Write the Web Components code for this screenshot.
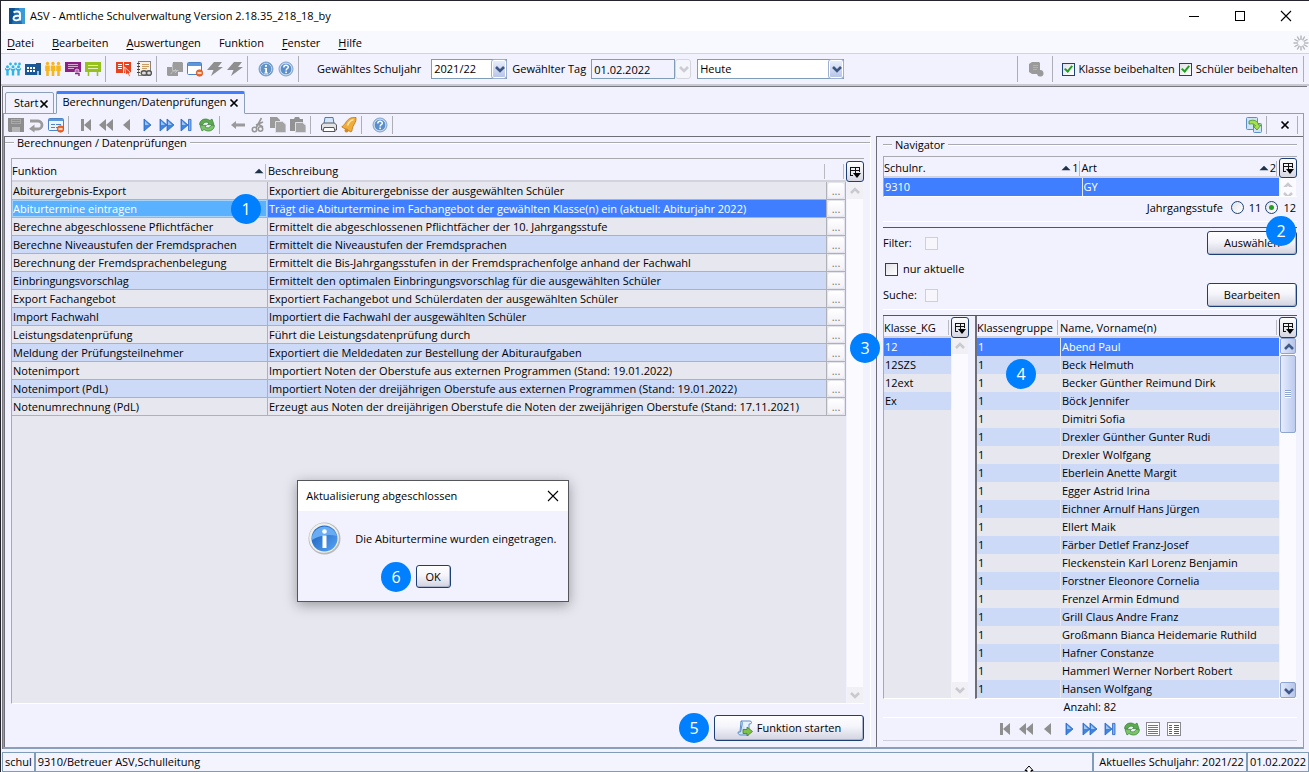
<!DOCTYPE html>
<html lang="de">
<head>
<meta charset="utf-8">
<title>ASV - Amtliche Schulverwaltung</title>
<style>
html, body { margin: 0; }
body { font: 11px/14px "Open Sans", "Noto Sans", sans-serif; color: #000; background: #f2f2ff; }
</style>
</head>
<body>
<asv-app></asv-app>
<script>
const define = (name, html, setup) => {
  const tpl = document.createElement('template');
  tpl.innerHTML = html;
  customElements.define(name, class extends HTMLElement {
    constructor() {
      super();
      this.attachShadow({ mode: 'open' }).append(tpl.content.cloneNode(true));
    }
    connectedCallback() { if (setup) setup(this, this.shadowRoot); }
  });
};

/* ---------- icons ---------- */
const G = '#8f8f8f', B = '#3f86e0';
const tri = (x, dir, c) => {
  const edge = c === B ? ' stroke="#2a66c4" stroke-width=".8"' : '';
  const shine = c === B ? `<path d="M${x + 1} 4v4h4z" fill="#9cc6f5"/>` : '';
  return dir > 0
    ? `<path d="M${x} 2v12l7-6z" fill="${c}"${edge}/>${shine}`
    : `<path d="M${x + 7} 2v12l-7-6z" fill="${c}"/>`;
};
const person = (x, c) => `<circle cx="${x}" cy="2.500" r="1.700" fill="${c}"/><path d="M${x - 2.3} 4.500h4.600v5.500h-1v5h-2.600v-5h-1z" fill="${c}"/>`;
const kid = x => `<circle cx="${x}" cy="5.800" r="1.500" fill="#2fb4e6"/><path d="M${x - 2.5} 6.500l1.500 1.500h2l1.500-1.500v2l-1.300 1.500v4.500h-2.400V10l-1.300-1.500z" fill="#2fb4e6"/>`;
const sheet = lines => `<rect x="1.500" y="1.500" width="13" height="13" fill="#fff" stroke="#8a8a92"/>${lines}`;
const disc = `<circle cx="8" cy="8" r="7" fill="#4f83bd" stroke="#7da2cc"/><circle cx="8" cy="8" r="5.800" fill="#5f93cb" stroke="#c9dcf0" stroke-width=".9"/>`;
const minus = `<circle cx="12.500" cy="12" r="3.300" fill="#f0692a" stroke="#c94a12" stroke-width=".6"/><rect x="10.500" y="11.300" width="4" height="1.400" fill="#fff"/>`;
const ICONS = {
  logo: `<rect width="16" height="16" fill="#1b6fb5"/><path d="M0 0h6L3 16H0z" fill="#0d4f8c"/><path d="M10 0h6v16h-3z" fill="#3a9bd8"/><path d="M4.500 4.500c2-1.400 6.500-1.600 6.500 1.500v6.500M11 8c-3-.6-6.500-.2-6.500 2.200 0 3 5 2.600 6.500.2" fill="none" stroke="#fff" stroke-width="1.900"/>`,
  kids: kid(2.5) + kid(8) + kid(13.5) + `<circle cx="5.500" cy="3" r="1.400" fill="#2fb4e6"/><circle cx="10.500" cy="3" r="1.400" fill="#2fb4e6"/><circle cx="14.500" cy="3" r="1.400" fill="#2fb4e6"/>`,
  building: `<path d="M0 3h11V2h5v12H0z" fill="#1a5794"/><path d="M2 6h2v2H2zM5 6h2v2H5zM8 6h2v2H8zM2 9h2v2H2zM5 9h2v2H5zM8 9h2v2H8z" fill="#fff"/><path d="M12 10h2v4h-2z" fill="#9fc0e0"/>`,
  adults: person(2.5, '#f6b61c') + person(8, '#f6b61c') + person(13.5, '#f6b61c'),
  board: `<path d="M0 1h16v10H0z" fill="#8b2082"/><path d="M3 3.500h10M3 5.500h10M3 7.500h6" stroke="#d9a9d5"/><circle cx="12" cy="10" r="2" fill="#b86bb0" stroke="#f2f2ff" stroke-width=".6"/><path d="M10 12.500h4V15" stroke="#8b2082" stroke-width="1.400" fill="none"/>`,
  greenboard: `<path d="M0 1h16v10H0z" fill="#97c11f"/><path d="M3 4.500h10M3 7.500h10" stroke="#e3f0bd"/><path d="M3.500 11v4M12.500 11v4" stroke="#97c11f" stroke-width="1.600"/>`,
  book: `<path d="M0 1h7v11H0zM8 1h7v11H8z" fill="#e8431f"/><path d="M2 3.500h4M2 5.500h4M2 7.500h4M9 3.500h4" stroke="#fff"/><path d="M8.500 6l6.500 6-2 .3 1.500 2.700-1.500.5-1.300-2.700-1.700 1.200z" fill="#e8431f" stroke="#fff" stroke-width=".7"/>`,
  notebook: `<rect x="2.500" y=".5" width="12" height="14" fill="#f4f1ea" stroke="#8b8378"/><path d="M1 2.500h3M1 5.500h3M1 8.500h3M1 11.500h3" stroke="#444"/><path d="M6 3.500h7M6 5.500h7M6 7.500h5" stroke="#c79b62"/><ellipse cx="8" cy="12" rx="2.800" ry="2.200" fill="#dcdce0" stroke="#555" stroke-width="1.400"/><ellipse cx="13" cy="12" rx="2.500" ry="2.200" fill="#dcdce0" stroke="#555" stroke-width="1.400"/>`,
  cubes: `<path d="M6 1h9l1 1v9h-5v4H1l-1-1V6h5z" fill="#9c9c9c"/><path d="M5.500 5v4.500h6M4 13c1-3 3-3 5-3M8 8l2 2-2 2" stroke="#c2c2c2" fill="none"/>`,
  windowminus: `<rect x=".5" y="1.500" width="14" height="12" rx="1" fill="#fff" stroke="#4b83c4"/><path d="M1 2h13v3H1z" fill="#5c97db"/>` + minus,
  formminus: `<rect x=".5" y="1.500" width="15" height="12" rx="1" fill="#eef4fc" stroke="#4b83c4"/><path d="M1 2h14v2H1z" fill="#5c97db"/><path d="M3 7.500h4M3 10.500h4M8 7.500h5M8 10.500h2" stroke="#4b83c4"/>` + minus,
  bolt: `<path d="M7 1h8l-4 5h5L4 15l2.500-6H0z" fill="${G}"/>`,
  info: disc + `<path d="M7 4h2v1.700H7zM6.500 7H9v4.500h1v1H6.300v-1h.9V8h-.7z" fill="#fff"/>`,
  help: disc.replace('#4f83bd', '#b8cde6').replace('#5f93cb', '#5b8fcc') + `<path d="M5.800 6.500c0-3 4.600-2.800 4.500-.3-.1 1.600-2.200 1.500-2.200 3.300" fill="none" stroke="#fff" stroke-width="1.500"/><rect x="7.300" y="10.500" width="1.600" height="1.600" fill="#fff"/>`,
  db: `<path d="M1 3l3-2h7l1 1v7a3.300 3.300 0 1 1-3 4H4l-3-2z" fill="#9a9a9a"/><path d="M5 4.500h5M5 6.500h5M5 8.500h4" stroke="#b9b9b9" stroke-width=".8"/>`,
  save: `<path d="M0 1h16v14H1l-1-1z" fill="#8d8d8d"/><path d="M3 2h10v5H3z" fill="#a9a9a9"/><path d="M4 10h8v5H4z" fill="#b4b4b4"/><path d="M4 3.500h8M4 5.500h8" stroke="#8d8d8d"/>`,
  undo: `<path d="M2 4h8a4 4 0 0 1 0 8H5" fill="none" stroke="#9a9a9a" stroke-width="2.800"/><path d="M6.500 7.500v8L1 11.800z" fill="#9a9a9a"/>`,
  first: `<path d="M2 2h3v12H2z" fill="${G}"/>` + tri(5, -1, G),
  prev2: tri(0, -1, G) + tri(7, -1, G),
  prev: tri(4, -1, G),
  next: tri(5, 1, B),
  next2: tri(1, 1, B) + tri(8, 1, B),
  last: tri(2, 1, B) + `<path d="M9.500 2.400h2.500v11.200H9.500z" fill="#7db0ef" stroke="#2a66c4" stroke-width=".8"/>`,
  refresh: `<path d="M.5 7.500C1 2 7 .5 11 3.500L13 2l2 5.500-6.500.2L10 6C7.500 4.500 5 5 4 7.500z" fill="#5dab4f" stroke="#357f30" stroke-width=".7"/><path d="M15.500 8.500C15 14 9 15.500 5 12.500L3 14 1 8.500l6.500-.2L6 10c2.500 1.500 5 1 6-1.500z" fill="#7cc46a" stroke="#357f30" stroke-width=".7"/>`,
  back: `<path d="M1 8l5-4v2.500h9v3H6V12z" fill="#9a9a9a"/>`,
  cut: `<path d="M11.500 1L6 11M8 7l5 3M6 8l7-3" stroke="#979797" stroke-width="1.600"/><circle cx="4.500" cy="12.500" r="2.200" fill="none" stroke="#979797" stroke-width="1.600"/><circle cx="10.500" cy="12" r="2.200" fill="none" stroke="#979797" stroke-width="1.600"/>`,
  copy: `<path d="M0 0h7l3 3v8H0z" fill="#9a9a9a"/><path d="M5.500 4.500h7l3.500 3v8H5.500z" fill="#a3a3a3" stroke="#dedee8"/>`,
  paste: `<path d="M0 2h4l1-2h4l1 2h3v12H0z" fill="#929292"/><path d="M5.500 5.500h7l3.500 3v7H5.500z" fill="#a3a3a3" stroke="#dedee8"/>`,
  print: `<path d="M4 .5h8l1 6H3z" fill="#d4e6fa" stroke="#4f79a8"/><path d="M.5 8l2-2h11l2 2v5H.5z" fill="#e3e3e6" stroke="#55555c"/><path d="M3 10.500h10l1 4H2z" fill="#fff" stroke="#55555c"/>`,
  bell: `<path d="M15 .5C10 0 6.500 2 4.500 6 3.500 8 1.500 8.500.8 10L10 15c1.500-1 1-3.500 2-5.500C13.500 6.500 15.500 4.500 15 .5z" fill="#f0ad3c" stroke="#bb7313" stroke-width=".8"/><path d="M12.500 2.500C9.500 3.500 7.500 5.500 6.500 8.500" stroke="#fde3a4" stroke-width="1.800" fill="none"/><circle cx="5.500" cy="13.500" r="2" fill="#d18a25"/>`,
  swap: `<rect x=".5" y=".5" width="11" height="12" rx="1" fill="#cfe3f6" stroke="#5d90c5"/><rect x="7.500" y="6.500" width="8" height="9" rx="1" fill="#cfe3f6" stroke="#5d90c5"/><path d="M3 4c5-2 9 0 9.500 4H15l-4 5-4-4h2.500C9 7 6 6.500 3 7z" fill="#a6e04a" stroke="#3e9420" stroke-width=".8"/>`,
  list1: sheet(`<path d="M3 4.500h10M3 6.500h10M3 8.500h10M3 10.500h10M3 12.500h10" stroke="#3b7fdc"/>`),
  list2: sheet(`<path d="M3 4.500h3M3 6.500h3M3 8.500h3M3 10.500h3M3 12.500h3M8 4.500h5M8 6.500h5M8 8.500h5M8 10.500h5M8 12.500h5" stroke="#55606e"/>`),
  close: `<path d="M4.500 4.500l7 7M11.500 4.500l-7 7" stroke="#000" stroke-width="1.700"/>`,
  columns: `<path d="M3 3.500h10M3 6.500h10M3.500 3v8M8.500 3v6M12.500 3v5M3 11.500h3" stroke="#111" fill="none"/><path d="M6 9h8l-4 5z" fill="#000"/>`,
  script: `<path d="M4 1h9c2 0 2 3 0 3l-1 0v8H3z" fill="#e8f2fd" stroke="#5b8fc9"/><path d="M4 1c2 .5 1 3 1 4L3.500 12H1c0 3 2 3 3 3h8" fill="#cfe2f7" stroke="#5b8fc9"/><path d="M6 9.500h4V7l5.500 4.500L10 16v-2.500H6z" fill="#7fc24a" stroke="#3f7f22" stroke-width=".8"/>`,
  up: `<path d="M4 10l4-4 4 4" fill="none" stroke="currentColor" stroke-width="2.600"/>`,
  down: `<path d="M4 6l4 4 4-4" fill="none" stroke="currentColor" stroke-width="2.600"/>`,
  spinner: Array.from({ length: 12 }, (_, i) => `<path d="M8 .5v4.500" stroke="#b3b3ba" stroke-width="1.400" transform="rotate(${i * 30} 8 8)"/>`).join(''),
  bigclose: `<path d="M3 3l10 10M13 3L3 13" stroke="#000" stroke-width="1.100"/>`,
  max: `<rect x="3.500" y="3.500" width="9" height="9" fill="none" stroke="#000"/>`,
  min: `<path d="M3 8.500h10" stroke="#000"/>`,
  sort: `<path d="M2 11h12L8 5z" fill="#1f3348"/>`,
  cursor: `<path d="M8 3l4 4.500h-2v3H6v-3H4z" fill="#fff" stroke="#000"/>`
};
define('asv-icon', `<style>:host{display:block;flex:none;width:16px;height:16px}svg{display:block;width:100%;height:100%}</style><svg viewBox="0 0 16 16" aria-hidden="true"></svg>`,
  (el, root) => { root.querySelector('svg').innerHTML = ICONS[el.getAttribute('name')]; });

const iconButton = (name, label) => `<button type="button" class="ib" aria-label="${label}"><asv-icon name="${name}"></asv-icon></button>`;
const base = `
*{box-sizing:border-box}
button,input,select{font:inherit;color:inherit;margin:0}
.ib{border:0;background:none;padding:0;display:block;flex:none}
.sep{width:1px;background:#aeaeb6;flex:none;align-self:stretch}
.group{display:flex;align-items:center;gap:4px;padding:0 4px 0 10px}`;

define('step-badge', `<style>:host{display:grid;place-items:center;flex:none;width:30px;height:30px;border-radius:50%;background:#007fff;color:#fff;font:16px/20px "Open Sans",sans-serif;z-index:2}</style><slot></slot>`);

define('push-button', `<style>${base}
:host{display:block}
button{display:flex;align-items:center;justify-content:center;gap:4px;width:100%;height:100%;padding:0 8px;border:1px solid #1c3f75;border-radius:3px;background:linear-gradient(#fff,#f4f4fb 45%,#d3d3e0);box-shadow:inset -1px -1px 0 #a9b3cc}
</style><button type="button"><slot></slot></button>`);

define('column-button', `<style>${base}
:host{display:block;width:18px;height:21px;flex:none}
button{display:grid;place-items:center;width:100%;height:100%;padding:0;border:1px solid #1c3f75;border-radius:3px;background:linear-gradient(#fff,#d6d6e2)}
</style><button type="button" aria-label="Spalten"><asv-icon name="columns"></asv-icon></button>`);

define('scroll-bar', `<style>${base}
:host{display:flex;flex-direction:column;justify-content:space-between;flex:1;width:16px;background:#fafaff;color:#c9c9d0}
.b{display:grid;place-items:center;width:16px;height:16px;padding:0;border:0;background:#f1f1f5;color:inherit;flex:none}
:host([short]) .b{height:9px;overflow:hidden;background:none}
.track{flex:1;display:none}
:host([active]){color:#3f5a8a}
:host([active]) .b{border:1px solid #8ea6cf;border-radius:2px;background:linear-gradient(90deg,#e2e9fb,#b5c4e8)}
:host([active]) .track{display:block}
.thumb{height:78px;margin-top:1px;border:1px solid #8ea6cf;border-radius:2px;background:repeating-linear-gradient(#8ea6cf 0 1px,#fff 1px 2px) center/6px 8px no-repeat,linear-gradient(90deg,#e6edfd,#bccaee)}
</style><button class="b" type="button" aria-label="Nach oben"><asv-icon name="up"></asv-icon></button><div class="track"><div class="thumb"></div></div><button class="b" type="button" aria-label="Nach unten"><asv-icon name="down"></asv-icon></button>`);

define('asv-titlebar', `<style>${base}
:host{display:flex;align-items:center;height:30px;background:#fff;padding:0 15px 0 8px;line-height:16px}
h1{flex:1;margin:0 0 0 5px;font:inherit}
.w{display:flex;gap:30px}
</style><asv-icon name="logo"></asv-icon><h1>ASV - Amtliche Schulverwaltung Version 2.18.35_218_18_by</h1>
<div class="w">${iconButton('min', 'Minimieren')}${iconButton('max', 'Maximieren')}${iconButton('bigclose', 'Schließen')}</div>`);

define('asv-menubar', `<style>${base}
:host{display:flex;align-items:center;height:23px;background:#f8f8ff;border-bottom:1px solid #d3d3de;padding:2px 0 0 6px}
nav{display:flex;gap:18px;flex:1}a{color:inherit;text-decoration:none}u{text-underline-offset:2px}
</style><nav><a href="#"><u>D</u>atei</a><a href="#"><u>B</u>earbeiten</a><a href="#"><u>A</u>uswertungen</a><a href="#">Funktion</a><a href="#"><u>F</u>enster</a><a href="#"><u>H</u>ilfe</a></nav><asv-icon name="spinner"></asv-icon>`);

const checkCss = `
input[type=checkbox]{appearance:none;display:grid;place-items:center;width:13px;height:13px;border:1px solid #1c4378;background:linear-gradient(135deg,#e3e3e8,#fff);flex:none}
input[type=checkbox]:checked::before{content:"";width:3px;height:6px;border:solid #21a121;border-width:0 2px 2px 0;transform:translateY(-1px) rotate(40deg)}
input[type=checkbox]:disabled{border-color:#cfcfd6;background:#f7f7fb}`;

define('asv-toolbar', `<style>${base}${checkCss}
:host{display:flex;align-items:center;height:32px;border-bottom:2px solid #c9c9d1;padding:2px 5px 2px 0}
.group:first-of-type{padding-left:4px}
.sep{height:26px;align-self:center}
.combo{position:relative;display:flex;height:20px}
.combo select{appearance:none;width:100%;height:20px;border:1px solid #7f9db9;background:#fff;padding:0 18px 0 2px;border-radius:0}
.arrow{display:grid;place-items:center;width:16px;height:20px;padding:0;border:1px solid #9db0d2;border-radius:3px;background:linear-gradient(#eaf0fd,#b4c3e6);color:#3d5684}
.combo .arrow{position:absolute;right:0;top:0;pointer-events:none;box-shadow:inset 0 0 0 1px #fff}
.arrow[disabled]{background:#f5f5fc;border-color:#d5d5de;color:#ccccd4}
.year{width:76px}.when{width:147px}
.date{width:84px;height:20px;border:1px solid #7f9db9;background:#f2f2ff;padding:0 2px}
.f{display:flex;align-items:center;padding-left:18px}
.f label{margin-right:10px}
.f .l2{margin:0 5px}
.f .when{margin-left:6px}
.keep{display:flex;align-items:center;gap:4px;padding:0 5px 0 9px}
.keep label{display:flex;align-items:center;gap:4px;white-space:nowrap}
.sp{flex:1}
</style>
<div class="group">${iconButton('kids', 'Schüler')}${iconButton('building', 'Schule')}${iconButton('adults', 'Lehrer')}${iconButton('board', 'Unterricht')}${iconButton('greenboard', 'Klassen')}</div><div class="sep"></div>
<div class="group">${iconButton('book', 'Buch')}${iconButton('notebook', 'Notizen')}</div><div class="sep"></div>
<div class="group">${iconButton('cubes', 'Module')}${iconButton('windowminus', 'Fenster schließen')}${iconButton('bolt', 'Aktion 1')}${iconButton('bolt', 'Aktion 2')}</div><div class="sep"></div>
<div class="group">${iconButton('info', 'Info')}${iconButton('help', 'Hilfe')}</div><div class="sep"></div>
<div class="f"><label for="y">Gewähltes Schuljahr</label><span class="combo year"><select id="y"><option>2021/22</option></select><span class="arrow"><asv-icon name="down"></asv-icon></span></span>
<label class="l2" for="d">Gewählter Tag</label><input class="date" id="d" value="01.02.2022" readonly><button class="arrow" type="button" disabled aria-label="Kalender"><asv-icon name="down"></asv-icon></button>
<span class="combo when"><select aria-label="Zeitpunkt"><option>Heute</option></select><span class="arrow"><asv-icon name="down"></asv-icon></span></span></div>
<div class="sp"></div><div class="sep"></div><div class="group">${iconButton('db', 'Datenbank')}<span></span></div><div class="sep"></div>
<div class="keep"><label><input type="checkbox" checked>Klasse beibehalten</label><label><input type="checkbox" checked>Schüler beibehalten</label></div><div class="sep"></div>`);

define('asv-tabs', `<style>${base}
:host{display:flex;align-items:flex-end;height:27px;margin-bottom:-1px;padding-left:2px;gap:2px;position:relative}
.t{display:flex;align-items:center;height:22px;padding:0 3px 0 8px;border:1px solid #8ba0b8;border-radius:2px 2px 0 0}
.t.on{height:23px;border-top:3px solid #3f7fff;border-bottom-color:#f2f2ff;padding:0 4px 4px 5px;gap:1px}
.t .ib{width:12px;height:14px;overflow:hidden}.t asv-icon{margin-left:-2px}
</style><div class="t"><span>Start</span>${iconButton('close', 'Tab schließen')}</div><div class="t on"><span>Berechnungen/Datenprüfungen</span>${iconButton('close', 'Tab schließen')}</div>`);

define('asv-viewbar', `<style>${base}
:host{display:flex;align-items:center;height:22px;padding:0 5px 0 0}
.group:first-of-type{padding-left:4px}.sep{height:18px;align-self:center}.sp{flex:1}
</style>
<div class="group">${iconButton('save', 'Speichern')}${iconButton('undo', 'Rückgängig')}${iconButton('formminus', 'Formular schließen')}</div><div class="sep"></div>
<div class="group">${iconButton('first', 'Erster')}${iconButton('prev2', 'Seite zurück')}${iconButton('prev', 'Zurück')}${iconButton('next', 'Weiter')}${iconButton('next2', 'Seite vor')}${iconButton('last', 'Letzter')}${iconButton('refresh', 'Aktualisieren')}</div><div class="sep"></div>
<div class="group">${iconButton('back', 'Entfernen')}${iconButton('cut', 'Ausschneiden')}${iconButton('copy', 'Kopieren')}${iconButton('paste', 'Einfügen')}</div><div class="sep"></div>
<div class="group">${iconButton('print', 'Drucken')}${iconButton('bell', 'Erinnerung')}</div><div class="sep"></div>
<div class="group">${iconButton('help', 'Hilfe')}</div><div class="sep"></div>
<div class="sp"></div><div class="group">${iconButton('swap', 'Umschalten')}</div><div class="sep"></div><div class="group">${iconButton('close', 'Schließen')}</div><div class="sep"></div>`);

define('group-title', `<style>:host{display:flex;align-items:center;gap:3px}:host::before,:host::after{content:"";height:2px;background:linear-gradient(#a9a9b2 50%,#fff 50%)}:host::before{width:9px}:host::after{flex:1}h2{margin:0;font:inherit}</style><h2><slot></slot></h2>`);

const tableCss = `
.view{display:flex;border-top:1px solid #a9a9b0;border-left:1px solid #a9a9b0;border-bottom:1px solid #fff}
.cells{flex:1;min-width:0;background:#e7e7f0}
.side{display:flex;flex-direction:column;align-items:center;width:18px;flex:none}
table{border-collapse:separate;border-spacing:0;table-layout:fixed;width:100%}
th{font-weight:400;text-align:left;padding:3px 2px 0 0;background:#f2f2ff;border-bottom:2px solid #d3d3de;position:relative}
th .h{display:flex;align-items:center;justify-content:space-between;border-right:1px solid #b9b9c2;height:15px}
th .s{display:flex;align-items:center}
th asv-icon{width:12px}
td{height:18px;padding:0 0 0 1px;white-space:nowrap;background:#e7e7f0}
tr:nth-child(even) td{background:#cddaf7}
tbody tr.sel td{background:#3f7fff;color:#fff}`;

const FUNCTIONS = [
  ['Abiturergebnis-Export', 'Exportiert die Abiturergebnisse der ausgewählten Schüler'],
  ['Abiturtermine eintragen', 'Trägt die Abiturtermine im Fachangebot der gewählten Klasse(n) ein (aktuell: Abiturjahr 2022)'],
  ['Berechne abgeschlossene Pflichtfächer', 'Ermittelt die abgeschlossenen Pflichtfächer der 10. Jahrgangsstufe'],
  ['Berechne Niveaustufen der Fremdsprachen', 'Ermittelt die Niveaustufen der Fremdsprachen'],
  ['Berechnung der Fremdsprachenbelegung', 'Ermittelt die Bis-Jahrgangsstufen in der Fremdsprachenfolge anhand der Fachwahl'],
  ['Einbringungsvorschlag', 'Ermittelt den optimalen Einbringungsvorschlag für die ausgewählten Schüler'],
  ['Export Fachangebot', 'Exportiert Fachangebot und Schülerdaten der ausgewählten Schüler'],
  ['Import Fachwahl', 'Importiert die Fachwahl der ausgewählten Schüler'],
  ['Leistungsdatenprüfung', 'Führt die Leistungsdatenprüfung durch'],
  ['Meldung der Prüfungsteilnehmer', 'Exportiert die Meldedaten zur Bestellung der Abituraufgaben'],
  ['Notenimport', 'Importiert Noten der Oberstufe aus externen Programmen (Stand: 19.01.2022)'],
  ['Notenimport (PdL)', 'Importiert Noten der dreijährigen Oberstufe aus externen Programmen (Stand: 19.01.2022)'],
  ['Notenumrechnung (PdL)', 'Erzeugt aus Noten der dreijährigen Oberstufe die Noten der zweijährigen Oberstufe (Stand: 17.11.2021)']
];
define('function-panel', `<style>${base}${tableCss}
:host{display:flex;flex-direction:column;position:relative;flex:1;min-width:0;border-top:1px solid #6e6e76;border-left:1px solid #6e6e76;border-right:1px solid #fff;padding-bottom:6px}
group-title{height:12px}
.view{flex:1;margin:9px 6px 0 6px}
th{height:23px}
td{border-right:1px solid #b0b0b8;border-bottom:1px solid #b0b0b8;position:relative}
tbody tr.sel td.name{background:#5ab1ff;box-shadow:inset 0 0 0 1px #a8d3f8}
step-badge{position:absolute;right:6px;top:-6px}
td.more,tr:nth-child(even) td.more,tbody tr.sel td.more{padding:0;background:#e7e7f0;color:#777}
.more button{display:block;width:18px;height:17px;margin:0;padding:0;border:1px solid #e4e4ec;border-radius:3px;background:linear-gradient(#fff,#f1f1f8);line-height:14px}
.foot{display:flex;justify-content:flex-end;align-items:center;gap:5px;margin:11px 6px 0 0}
.foot push-button{width:150px;height:26px}
.foot step-badge{position:static;margin:-2px 0}
info-dialog{position:absolute;left:49.5%;top:343px;transform:translateX(-50%)}
column-button{margin:2px 0 1px}
</style>
<group-title>Berechnungen / Datenprüfungen</group-title>
<div class="view"><div class="cells"><table>
<colgroup><col style="width:256px"><col><col style="width:19px"></colgroup>
<thead><tr><th><div class="h">Funktion<asv-icon name="sort"></asv-icon></div></th><th><div class="h">Beschreibung</div></th><th><div class="h"></div></th></tr></thead><tbody></tbody></table></div>
<div class="side"><column-button></column-button><scroll-bar></scroll-bar></div></div>
<div class="foot"><step-badge>5</step-badge><push-button><asv-icon name="script"></asv-icon>Funktion starten</push-button></div>
<info-dialog></info-dialog>`,
  (el, root) => {
    root.querySelector('tbody').innerHTML = FUNCTIONS.map(([n, d], i) =>
      `<tr${i === 1 ? ' class="sel"' : ''}><td class="name">${n}${i === 1 ? '<step-badge>1</step-badge>' : ''}</td><td>${d}</td><td class="more"><button type="button">...</button></td></tr>`).join('');
  });

define('info-dialog', `<style>${base}
:host{display:block;width:272px;border:1px solid #55555c;background:#f2f2ff;box-shadow:0 3px 12px rgba(0,0,0,.35);z-index:3}
header{display:flex;align-items:center;justify-content:space-between;height:30px;padding:0 7px 0 8px;background:#fff}
.m{display:flex;align-items:center;gap:14px;padding:10px 10px 0 10px;height:44px}
.m svg{width:33px;height:33px;flex:none}
p{margin:2px 0 0;white-space:nowrap}
.a{position:relative;display:flex;justify-content:center;padding:10px 0 13px}
.a push-button{width:35px;height:23px}
step-badge{position:absolute;left:83px;top:7px}
</style>
<header><span>Aktualisierung abgeschlossen</span>${iconButton('bigclose', 'Schließen')}</header>
<div class="m"><svg viewBox="0 0 33 33"><defs><linearGradient id="g" x1="0" y1="0" x2="1" y2="1"><stop offset="0" stop-color="#1659b5"/><stop offset="1" stop-color="#58a6f8"/></linearGradient></defs><circle cx="16.500" cy="16.500" r="16" fill="#b9b9b9"/><circle cx="16" cy="16" r="14.800" fill="#f1f1ec"/><circle cx="16.500" cy="16.500" r="13" fill="url(#g)"/><path d="M4 14a13 13 0 0 1 25 0c-8-2-17-1-25 4z" fill="#69acf3"/><circle cx="16.500" cy="9.500" r="2.300" fill="#fff"/><rect x="14.500" y="13.500" width="4" height="12.500" fill="#fff"/></svg><p>Die Abiturtermine wurden eingetragen.</p></div>
<div class="a"><step-badge>6</step-badge><push-button>OK</push-button></div>`);

const NAMES = ['Abend Paul', 'Beck Helmuth', 'Becker Günther Reimund Dirk', 'Böck Jennifer', 'Dimitri Sofia', 'Drexler Günther Gunter Rudi', 'Drexler Wolfgang', 'Eberlein Anette Margit', 'Egger Astrid Irina', 'Eichner Arnulf Hans Jürgen', 'Ellert Maik', 'Färber Detlef Franz-Josef', 'Fleckenstein Karl Lorenz Benjamin', 'Forstner Eleonore Cornelia', 'Frenzel Armin Edmund', 'Grill Claus Andre Franz', 'Großmann Bianca Heidemarie Ruthild', 'Hafner Constanze', 'Hammerl Werner Norbert Robert', 'Hansen Wolfgang'];
define('asv-navigator', `<style>${base}${tableCss}${checkCss}
:host{display:flex;flex-direction:column;flex:0 0 427px;border-top:1px solid #6e6e76;border-left:1px solid #6e6e76;padding:0 6px 6px 6px;position:relative}
group-title{height:16px;margin-bottom:3px}
.school th{height:21px}
.school column-button{height:20px}
td+td{border-left:1px solid #e7e7f0}
.stage{display:flex;align-items:center;justify-content:flex-end;height:21px;gap:8px;margin-bottom:3px;padding-right:1px}
.stage label{display:flex;align-items:center;gap:5px}
.stage label+label{margin-left:-4px}
input[type=radio]{appearance:none;display:grid;place-items:center;width:13px;height:13px;border:1px solid #1c4378;border-radius:50%;background:linear-gradient(135deg,#e3e3e8,#fff)}
input[type=radio]:checked::before{content:"";width:5px;height:5px;border-radius:50%;background:#21a121}
.rule{height:7px;border-top:1px solid #fff;border-bottom:1px solid #55555c;flex:none}
.filter{position:relative;display:grid;grid-template-columns:42px 1fr 90px;grid-template-rows:24px 28px 24px;align-items:center;margin:3px 0 2px}
.filter .wide{grid-column:1/3;display:flex;align-items:center;gap:5px;margin-left:2px}
.filter .wide+*{grid-column:1}
.filter push-button{height:24px;grid-column:3}
.filter step-badge{position:absolute;right:1px;top:-15px}
.lists{position:relative;display:flex;flex:1}
.lists .view{border-top:0}
.k{width:86px;margin-right:6px}
.p{flex:1;border-left:2px solid #6e6e76!important}
.lists th{height:22px}
.side column-button{margin-top:1px}
.k3{position:absolute;left:-33px;top:17px}
.k4{position:absolute;left:123px;top:43px}
.count{height:18px;line-height:16px;text-align:center}
.pager{display:flex;justify-content:center;align-items:center;gap:5px;height:24px;border-top:1px solid #fff;border-bottom:1px solid #cfcfdc}
</style>
<group-title>Navigator</group-title>
<div class="view school"><div class="cells"><table><colgroup><col style="width:50%"><col></colgroup><thead><tr><th><div class="h">Schulnr.<span class="s"><asv-icon name="sort"></asv-icon>1</span></div></th><th><div class="h">Art<span class="s"><asv-icon name="sort"></asv-icon>2</span></div></th></tr></thead><tbody><tr class="sel"><td>9310</td><td>GY</td></tr></tbody></table></div><div class="side"><column-button></column-button><scroll-bar short></scroll-bar></div></div>
<div class="stage"><span>Jahrgangsstufe</span><label><input type="radio" name="j">11</label><label><input type="radio" name="j" checked>12</label></div>
<div class="rule"></div>
<div class="filter"><label for="f">Filter:</label><input type="checkbox" id="f" disabled><push-button>Auswählen</push-button>
<label class="wide"><input type="checkbox">nur aktuelle</label>
<label for="s">Suche:</label><input type="checkbox" id="s" disabled><push-button>Bearbeiten</push-button><step-badge>2</step-badge></div>
<div class="rule"></div>
<div class="lists">
<div class="view k"><div class="cells"><table><thead><tr><th><div class="h">Klasse_KG</div></th></tr></thead><tbody><tr class="sel"><td>12</td></tr><tr><td>12SZS</td></tr><tr><td>12ext</td></tr><tr><td>Ex</td></tr></tbody></table></div><div class="side"><column-button></column-button><scroll-bar></scroll-bar></div></div>
<div class="view p"><div class="cells"><table class="people"><colgroup><col style="width:83px"><col></colgroup><thead><tr><th><div class="h">Klassengruppe</div></th><th><div class="h">Name, Vorname(n)</div></th></tr></thead><tbody></tbody></table></div><div class="side"><column-button></column-button><scroll-bar active></scroll-bar></div></div>
<step-badge class="k3">3</step-badge><step-badge class="k4">4</step-badge></div>
<div class="count">Anzahl: 82</div>
<div class="pager">${['first', 'prev2', 'prev', 'next', 'next2', 'last', 'refresh', 'list1', 'list2'].map(n => iconButton(n, n)).join('')}</div>`,
  (el, root) => {
    root.querySelector('.people tbody').innerHTML = NAMES.map((n, i) => `<tr${i ? '' : ' class="sel"'}><td>1</td><td>${n}</td></tr>`).join('');
  });

define('asv-statusbar', `<style>${base}
:host{display:flex;position:relative;height:20px;margin-left:1px;background:#f4f4ff}
span{border:1px solid #7f9db9;padding:0 2px;line-height:18px;white-space:nowrap}
.g{flex:1}.y{padding:0 2px 0 5px}
asv-icon{position:absolute;left:78%;bottom:-7px}
</style><span>schul</span><span class="g">9310/Betreuer ASV,Schulleitung</span><span class="y">Aktuelles Schuljahr: 2021/22</span><span>01.02.2022</span><asv-icon name="cursor"></asv-icon>`);

define('asv-app', `<style>${base}
:host{display:flex;flex-direction:column;box-sizing:border-box;min-height:100vh;border-top:1px solid #25252d;border-left:1px solid #25252d;overflow:hidden}
main{flex:1;display:flex;flex-direction:column;margin:0 2px 3px 1px;border-top:1px solid #77777f;border-left:1px solid #77777f}
.frame{flex:1;display:flex;flex-direction:column;border:1px solid #8ba0b8;border-bottom-width:2px;margin-right:3px}
.split{flex:1;display:flex;gap:5px}
</style>
<asv-titlebar></asv-titlebar><asv-menubar></asv-menubar><asv-toolbar></asv-toolbar>
<main><asv-tabs></asv-tabs><div class="frame"><asv-viewbar></asv-viewbar><div class="split"><function-panel></function-panel><asv-navigator></asv-navigator></div></div></main>
<asv-statusbar></asv-statusbar>`);
</script>
</body>
</html>
